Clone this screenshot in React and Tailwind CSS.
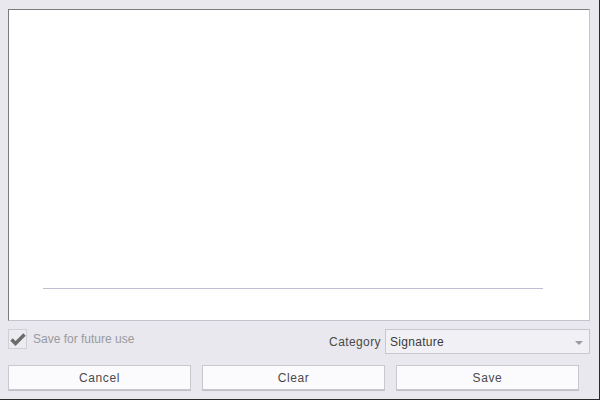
export default function App() {
  const font = { fontFamily: '"Liberation Sans", Arial, sans-serif' };
  return (
    <div
      className="w-[600px] h-[400px] bg-[#e8e8ee] border-r border-b border-[#2a2a2a] pl-2 pt-[9px] pr-[9px] flex flex-col text-[12px]"
      style={font}
    >
      <div className="h-[312px] bg-white border border-t-[#7a7a7a] border-l-[#7a7a7a] border-r-[#c4c4cc] border-b-[#c4c4cc] flex flex-col justify-end pb-[31px]">
        <div className="ml-[34px] w-[500px] h-px bg-[#c2bed2]" />
      </div>

      <div className="mt-2 flex items-center h-[25px]">
        <div className="flex items-center gap-[6px] -mt-[6px]">
          <div className="w-[19px] h-[20px] border border-[#d0d0d6] bg-[#ececf0] flex items-center justify-center">
            <svg width="16" height="14" viewBox="0 0 16 14">
              <path d="M1.5 7.5 L5.5 11.5 L14.5 2.5" fill="none" stroke="#6b6b6b" strokeWidth="3.4" />
            </svg>
          </div>
          <span className="text-[#9a9aa0] text-[12px]">Save for future use</span>
        </div>
        <div className="ml-auto flex items-center gap-[4px]">
          <span className="text-[#4a4a4a] tracking-[0.4px]">Category</span>
          <div className="relative w-[205px] h-[25px] border border-[#c8c8ce] bg-[#f1f1f5] flex items-center pl-[4px] text-[#3a3a3a] tracking-[0.3px]">
            Signature
            <svg className="absolute right-[6px] top-[11px]" width="8" height="4" viewBox="0 0 8 4">
              <path d="M0 0 L8 0 L4 4 Z" fill="#9a9aa0" />
            </svg>
          </div>
        </div>
      </div>

      <div className="mt-[11px] w-[571px] flex gap-[11px]">
        {['Cancel', 'Clear', 'Save'].map((t) => (
          <button
            key={t}
            className="flex-1 h-[25px] bg-[#fbfbfd] border border-[#c8c8ce] shadow-[0_1px_0_#c0c0c8] text-[#4a4a4a] font-normal text-[12px] tracking-[0.6px] flex items-center justify-center"
          >
            {t}
          </button>
        ))}
      </div>
    </div>
  );
}
